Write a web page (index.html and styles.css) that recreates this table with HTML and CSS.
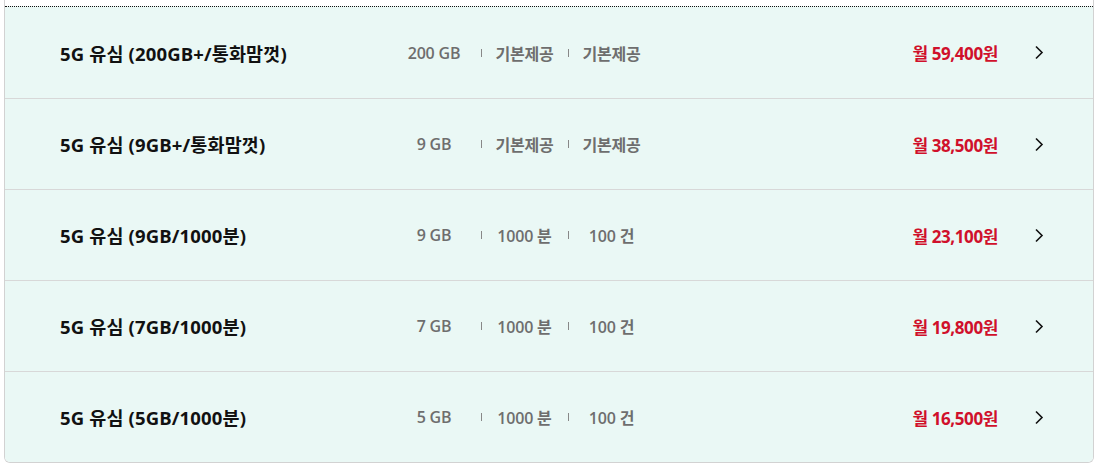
FILE: index.html
```html
<!DOCTYPE html>
<html lang="ko">
<head>
<meta charset="utf-8">
<link rel="stylesheet" href="styles.css">
</head>
<body>
<div class="box">
  <ul class="plans">
    <li class="plan first">
      <span class="name">5G 유심 (200GB+/통화맘껏)</span>
      <span class="specs"><span class="spec c1">200 GB</span><span class="spec">기본제공</span><span class="spec">기본제공</span></span>
      <span class="price">월 59,400원</span>
      <svg class="chev" width="10" height="15" viewBox="0 0 10 15"><path d="M2 1.5 L8 7.5 L2 13.5" fill="none" stroke="#111" stroke-width="1.6"/></svg>
    </li>
    <li class="plan">
      <span class="name">5G 유심 (9GB+/통화맘껏)</span>
      <span class="specs"><span class="spec c1">9 GB</span><span class="spec">기본제공</span><span class="spec">기본제공</span></span>
      <span class="price">월 38,500원</span>
      <svg class="chev" width="10" height="15" viewBox="0 0 10 15"><path d="M2 1.5 L8 7.5 L2 13.5" fill="none" stroke="#111" stroke-width="1.6"/></svg>
    </li>
    <li class="plan">
      <span class="name">5G 유심 (9GB/1000분)</span>
      <span class="specs"><span class="spec c1">9 GB</span><span class="spec">1000 분</span><span class="spec">100 건</span></span>
      <span class="price">월 23,100원</span>
      <svg class="chev" width="10" height="15" viewBox="0 0 10 15"><path d="M2 1.5 L8 7.5 L2 13.5" fill="none" stroke="#111" stroke-width="1.6"/></svg>
    </li>
    <li class="plan">
      <span class="name">5G 유심 (7GB/1000분)</span>
      <span class="specs"><span class="spec c1">7 GB</span><span class="spec">1000 분</span><span class="spec">100 건</span></span>
      <span class="price">월 19,800원</span>
      <svg class="chev" width="10" height="15" viewBox="0 0 10 15"><path d="M2 1.5 L8 7.5 L2 13.5" fill="none" stroke="#111" stroke-width="1.6"/></svg>
    </li>
    <li class="plan">
      <span class="name">5G 유심 (5GB/1000분)</span>
      <span class="specs"><span class="spec c1">5 GB</span><span class="spec">1000 분</span><span class="spec">100 건</span></span>
      <span class="price">월 16,500원</span>
      <svg class="chev" width="10" height="15" viewBox="0 0 10 15"><path d="M2 1.5 L8 7.5 L2 13.5" fill="none" stroke="#111" stroke-width="1.6"/></svg>
    </li>
  </ul>
</div>
</body>
</html>
```
FILE: styles.css
```css
html, body {
  margin: 0;
  padding: 0;
  background: #fff;
}
body {
  font-family: "Open Sans", "Noto Sans CJK KR", sans-serif;
  padding: 0 7px 0 4px;
}
.box {
  border: 1px solid #d2d2d2;
  border-top: none;
  border-radius: 0 0 6px 6px;
  padding-top: 6px;
  overflow: hidden;
}
.plans {
  list-style: none;
  margin: 0;
  padding: 0;
  border-top: 1px dotted #111;
  background: #eaf8f5;
}
.plan {
  display: flex;
  align-items: center;
  height: 90px;
  padding: 0 49px 0 55px;
  border-top: 1px solid #d8d8d8;
}
.plan.first {
  border-top: none;
  height: 91px;
}
.name {
  width: 327px;
  flex: none;
  font-size: 18.5px;
  font-weight: 700;
  color: #111;
  letter-spacing: 0.15px;
}
.specs {
  display: flex;
  align-items: center;
}
.spec {
  width: 87px;
  text-align: center;
  font-size: 16px;
  font-weight: 600;
  color: #6e6e6e;
  letter-spacing: -0.2px;
  position: relative;
}
.spec + .spec::before {
  content: "";
  position: absolute;
  left: 0;
  top: 50%;
  width: 1px;
  height: 8px;
  margin-top: -4px;
  background: #888;
}
.spec.c1 {
  width: 94px;
}
.price {
  margin-left: auto;
  font-size: 17px;
  font-weight: 700;
  color: #d0102b;
  letter-spacing: -0.4px;
}
.chev {
  margin-left: 36px;
  flex: none;
}
```
